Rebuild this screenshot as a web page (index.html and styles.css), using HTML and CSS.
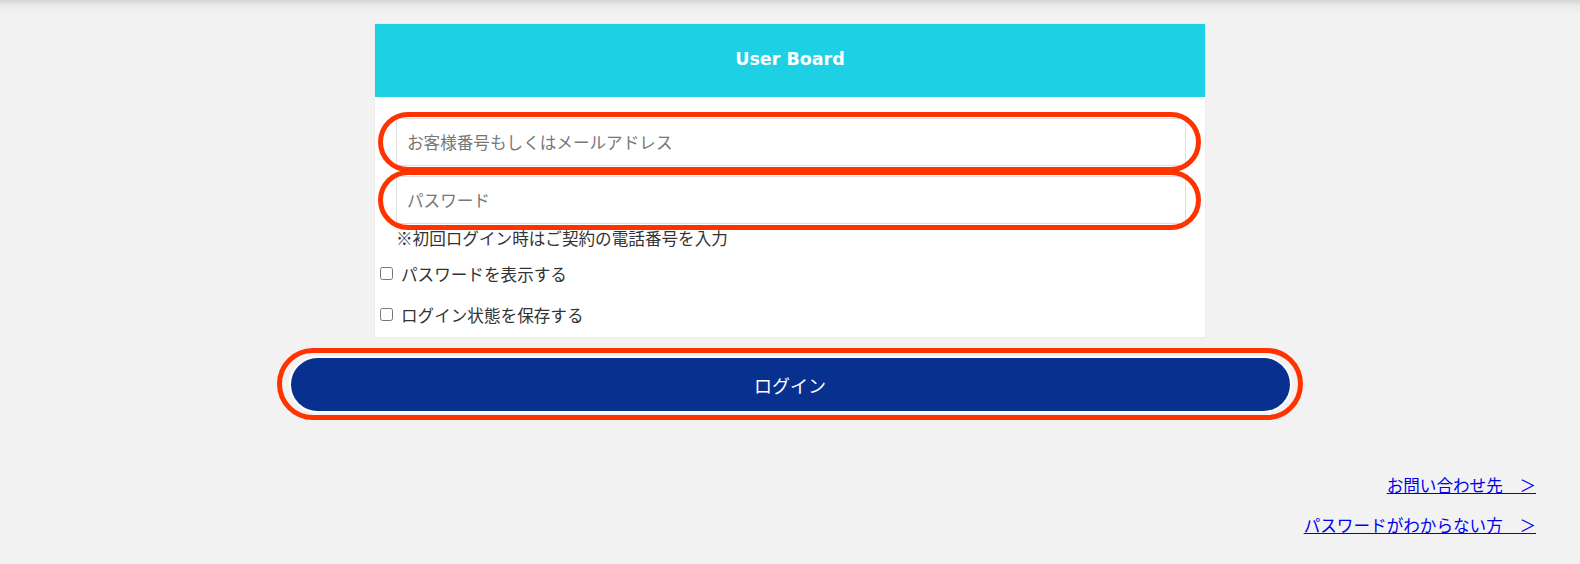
FILE: index.html
```html
<!DOCTYPE html>
<html lang="ja">
<head>
<meta charset="utf-8">
<title>User Board</title>
<link rel="stylesheet" href="styles.css">
</head>
<body>
<main class="page">
  <section class="card">
    <header class="card-head">User Board</header>
    <form class="card-body">
      <div class="field ring">
        <input class="input" type="text" placeholder="お客様番号もしくはメールアドレス">
      </div>
      <div class="field ring">
        <input class="input" type="password" placeholder="パスワード">
      </div>
      <p class="note">※初回ログイン時はご契約の電話番号を入力</p>
      <label class="check"><input type="checkbox" class="cb"><span>パスワードを表示する</span></label>
      <label class="check"><input type="checkbox" class="cb"><span>ログイン状態を保存する</span></label>
    </form>
  </section>
  <div class="btn-wrap ring-btn">
    <button class="login" type="button">ログイン</button>
  </div>
  <nav class="links">
    <a href="#">お問い合わせ先　＞</a>
    <a href="#">パスワードがわからない方　＞</a>
  </nav>
</main>
</body>
</html>
```

FILE: styles.css
```css
* { box-sizing: border-box; }
html, body { margin: 0; padding: 0; }
body {
  background: linear-gradient(to bottom, #d6d6d6 0, #ebebeb 6px, #f2f2f2 14px) no-repeat, #f2f2f2;
  font-family: "Noto Sans CJK JP", "Noto Sans", sans-serif;
  color: #333;
  width: 1580px;
  height: 564px;
  overflow: hidden;
}
.page {
  padding-top: 23px;
  display: flex;
  flex-direction: column;
  align-items: center;
}
.card {
  width: 832px;
  background: #fff;
  border: 1px solid #f1e9e9;
}
.card-head {
  height: 73px;
  padding-bottom: 3px;
  background: #1dd0e3;
  color: #fff;
  font-family: "DejaVu Sans", sans-serif;
  font-weight: bold;
  font-size: 17.5px;
  display: flex;
  align-items: center;
  justify-content: center;
}
.card-body {
  padding: 21px 19px 2px 21px;
  margin: 0;
}
.field {
  position: relative;
  margin-bottom: 10px;
}
.field + .field { margin-bottom: 4px; }
.ring::after {
  content: "";
  position: absolute;
  top: -6px; bottom: -6px; left: -18px; right: -15px;
  border: 5px solid #ff3300;
  border-radius: 32px;
  pointer-events: none;
}
.input {
  display: block;
  width: 100%;
  height: 48px;
  border: 1px solid #dedede;
  border-radius: 4px;
  padding: 0 10px;
  font-family: inherit;
  font-size: 16.6px;
  color: #333;
  background: #fff;
}
.input::placeholder { color: #777; }
.note {
  margin: 0;
  font-size: 16.6px;
  line-height: 20px;
  height: 20px;
  color: #333;
}
.check {
  display: flex;
  align-items: center;
  height: 41px;
  margin-left: -16px;
  font-size: 16.6px;
  color: #333;
}
.check:first-of-type { margin-top: 5px; }
.cb {
  margin: 0 8px 0 0;
  width: 13px;
  height: 13px;
}
.btn-wrap {
  position: relative;
  margin-top: 20px;
  width: 999px;
}
.ring-btn::after {
  content: "";
  position: absolute;
  top: -10px; bottom: -9px; left: -14px; right: -13px;
  border: 5px solid #ff3300;
  border-radius: 40px;
  pointer-events: none;
}
.login {
  display: block;
  width: 100%;
  height: 53px;
  border: 0;
  border-radius: 27px;
  background: #08308f;
  box-shadow: 0 0 0 2px #fff;
  color: #fff;
  font-family: inherit;
  font-size: 18px;
}
.links {
  align-self: stretch;
  display: flex;
  flex-direction: column;
  align-items: flex-end;
  gap: 16px;
  margin-top: 62px;
  padding-right: 44px;
}
.links a {
  color: #0000ee;
  font-size: 16.6px;
  line-height: 24px;
}
```
